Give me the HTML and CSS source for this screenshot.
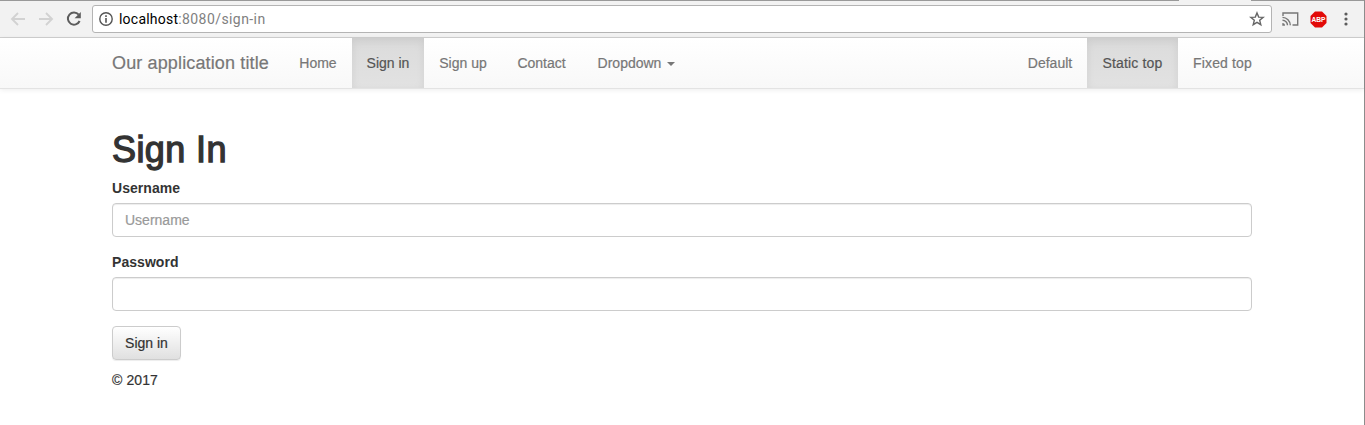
FILE: index.html
```html
<!DOCTYPE html>
<html lang="en">
<head>
<meta charset="utf-8">
<title>Sign In</title>
<link rel="stylesheet" href="styles.css">
</head>
<body>
<div class="window">
  <div class="tab-edge"><span class="tab-gap"></span></div>
  <div class="toolbar">
    <svg class="nav-icons" width="92" height="36" viewBox="0 0 92 36" fill="none">
      <path d="M25 18H12.5M18 12l-6 6 6 6" stroke="#d2d2d2" stroke-width="1.9"/>
      <path d="M39 18h12.500M46 12l6 6-6 6" stroke="#d2d2d2" stroke-width="1.9"/>
      <path d="M78.700 13.700A6.100 6.100 0 1 0 79.600 20" stroke="#5c5c5c" stroke-width="2"/>
      <path d="M80.800 11v6.200h-6.200z" fill="#5c5c5c"/>
    </svg>
    <div class="address">
      <svg class="info" width="14" height="14" viewBox="0 0 14 14">
        <circle cx="7" cy="7" r="6.200" fill="none" stroke="#555" stroke-width="1.400"/>
        <path d="M6.200 3.300h1.600v1.600H6.200zM6.200 6h1.600v4.700H6.200z" fill="#555"/>
      </svg>
      <span class="url"><b>localhost</b>:8080/sign-in</span>
      <svg class="star" width="16" height="16" viewBox="0 0 16 16">
        <path d="M8 1.900l1.700 4.200 4.500.3-3.500 2.900 1.100 4.400L8 11.300l-3.800 2.400 1.100-4.400-3.500-2.900 4.500-.3z" fill="none" stroke="#666" stroke-width="1.400"/>
      </svg>
    </div>
    <svg class="cast" width="17" height="14" viewBox="0 0 17 14" fill="none" stroke="#777" stroke-width="1.400">
      <path d="M1 4V1h14.700v12H10.500M.5 5.400A8 8 0 0 1 8.300 13.300M.5 8.200a5.100 5.100 0 0 1 5 5.100"/>
      <path d="M.3 11v2.700H3A2.700 2.700 0 0 0 .3 11z" fill="#777" stroke="none"/>
    </svg>
    <svg class="abp" width="21" height="17" viewBox="-2 0 21 17">
      <path d="M5 .5h7L16.500 5v7L12 16.500H5L.5 12V5z" fill="#e20a08"/>
      <text x="8.500" y="11.300" text-anchor="middle" textLength="14" lengthAdjust="spacingAndGlyphs">ABP</text>
    </svg>
    <svg class="more" width="4" height="14" viewBox="0 0 4 14" fill="#5c5c5c">
      <circle cx="2" cy="2" r="1.600"/><circle cx="2" cy="7" r="1.600"/><circle cx="2" cy="12" r="1.600"/>
    </svg>
  </div>
  <nav class="navbar">
    <div class="container nav-row">
      <a class="brand">Our application title</a>
      <a class="item home">Home</a>
      <a class="item signin active">Sign in</a>
      <a class="item signup">Sign up</a>
      <a class="item contact">Contact</a>
      <a class="item dropdown">Dropdown<i class="caret"></i></a>
      <span class="spacer"></span>
      <a class="item default">Default</a>
      <a class="item static active">Static top</a>
      <a class="item fixed">Fixed top</a>
    </div>
  </nav>
  <main class="container">
    <h1>Sign In</h1>
    <form>
      <label for="username">Username</label>
      <input id="username" type="text" placeholder="Username">
      <label for="password">Password</label>
      <input id="password" type="password">
      <button type="button">Sign in</button>
    </form>
    <footer>© 2017</footer>
  </main>
</div>
</body>
</html>
```
FILE: styles.css
```css
* { box-sizing: border-box; }
body {
  margin: 0;
  overflow: hidden;
  background: #fff;
  color: #333;
  font: 14px/20px "Liberation Sans", Arial, sans-serif;
  -webkit-text-stroke: .2px;
}
.window { height: 425px; border-right: 1px solid #8c8c8c; }
.tab-edge { height: 1px; background: #999; padding-left: 1179px; }
.tab-gap { display: block; width: 72px; height: 1px; background: #f2f2f2; }
.toolbar {
  display: flex;
  align-items: center;
  height: 37px;
  background: #f2f2f2;
  border-bottom: 1px solid #d0d0d0;
  -webkit-text-stroke: 0;
}
.nav-icons { flex: none; }
.address {
  display: flex;
  align-items: center;
  width: 1180px;
  height: 28px;
  padding: 0 6px;
  background: #fff;
  border: 1px solid #b4b4b4;
  border-radius: 3px;
}
.url {
  flex: 1;
  margin-left: 6px;
  color: #808080;
  font: 14px/20px Roboto, sans-serif;
  letter-spacing: .42px;
}
.url b { color: #000; font-weight: 400; letter-spacing: .22px; }
.cast { margin-left: 10px; }
.abp { margin-left: 9px; }
.abp text { font: bold 8px "Liberation Sans", sans-serif; fill: #fff; }
.more { margin-left: 15px; }
.container { width: 1140px; margin-left: 112px; }
.navbar {
  height: 51px;
  background: linear-gradient(#fff, #f8f8f8);
  border-bottom: 1px solid #e3e3e3;
  box-shadow: 0 1px 5px rgba(0, 0, 0, .075);
}
.nav-row { display: flex; width: 1155px; height: 50px; color: #777; }
.brand { width: 172px; font-size: 18px; line-height: 50px; white-space: nowrap; letter-spacing: .14px; }
.item { line-height: 50px; text-align: center; white-space: nowrap; }
.active {
  color: #555;
  background: linear-gradient(#dbdbdb, #e2e2e2);
  box-shadow: inset 0 3px 9px rgba(0, 0, 0, .075);
}
.home { width: 68px; }
.signin { width: 72px; }
.signup { width: 78px; }
.contact { width: 79px; }
.dropdown { width: 111px; }
.caret {
  display: inline-block;
  margin-left: 6px;
  vertical-align: middle;
  border-top: 4px solid;
  border-left: 4px solid transparent;
  border-right: 4px solid transparent;
}
.spacer { flex: 1; }
.default { width: 74px; }
.static { width: 91px; letter-spacing: .15px; }
.fixed { width: 89px; letter-spacing: .15px; }
h1 {
  margin: 41px 0 9px;
  font-size: 36px;
  line-height: 39px;
  font-weight: 400;
  letter-spacing: .4px;
  -webkit-text-stroke: 1.3px #333;
}
label { display: block; margin-bottom: 5px; font-weight: 700; letter-spacing: .05px; -webkit-text-stroke: 0; }
input {
  display: block;
  width: 100%;
  height: 34px;
  margin: 0 0 15px;
  padding: 6px 12px;
  font: inherit;
  color: #555;
  background: #fff;
  border: 1px solid #ccc;
  border-radius: 4px;
  box-shadow: inset 0 1px 1px rgba(0, 0, 0, .075);
}
input::placeholder { color: #999; opacity: 1; }
button {
  display: block;
  width: 69px;
  height: 34px;
  padding: 0;
  font: inherit;
  color: #333;
  background: linear-gradient(#fff, #e0e0e0);
  border: 1px solid #ccc;
  border-radius: 4px;
  box-shadow: inset 0 1px 0 rgba(255, 255, 255, .15), 0 1px 1px rgba(0, 0, 0, .075);
}
footer { margin-top: 10px; letter-spacing: .1px; }
```
